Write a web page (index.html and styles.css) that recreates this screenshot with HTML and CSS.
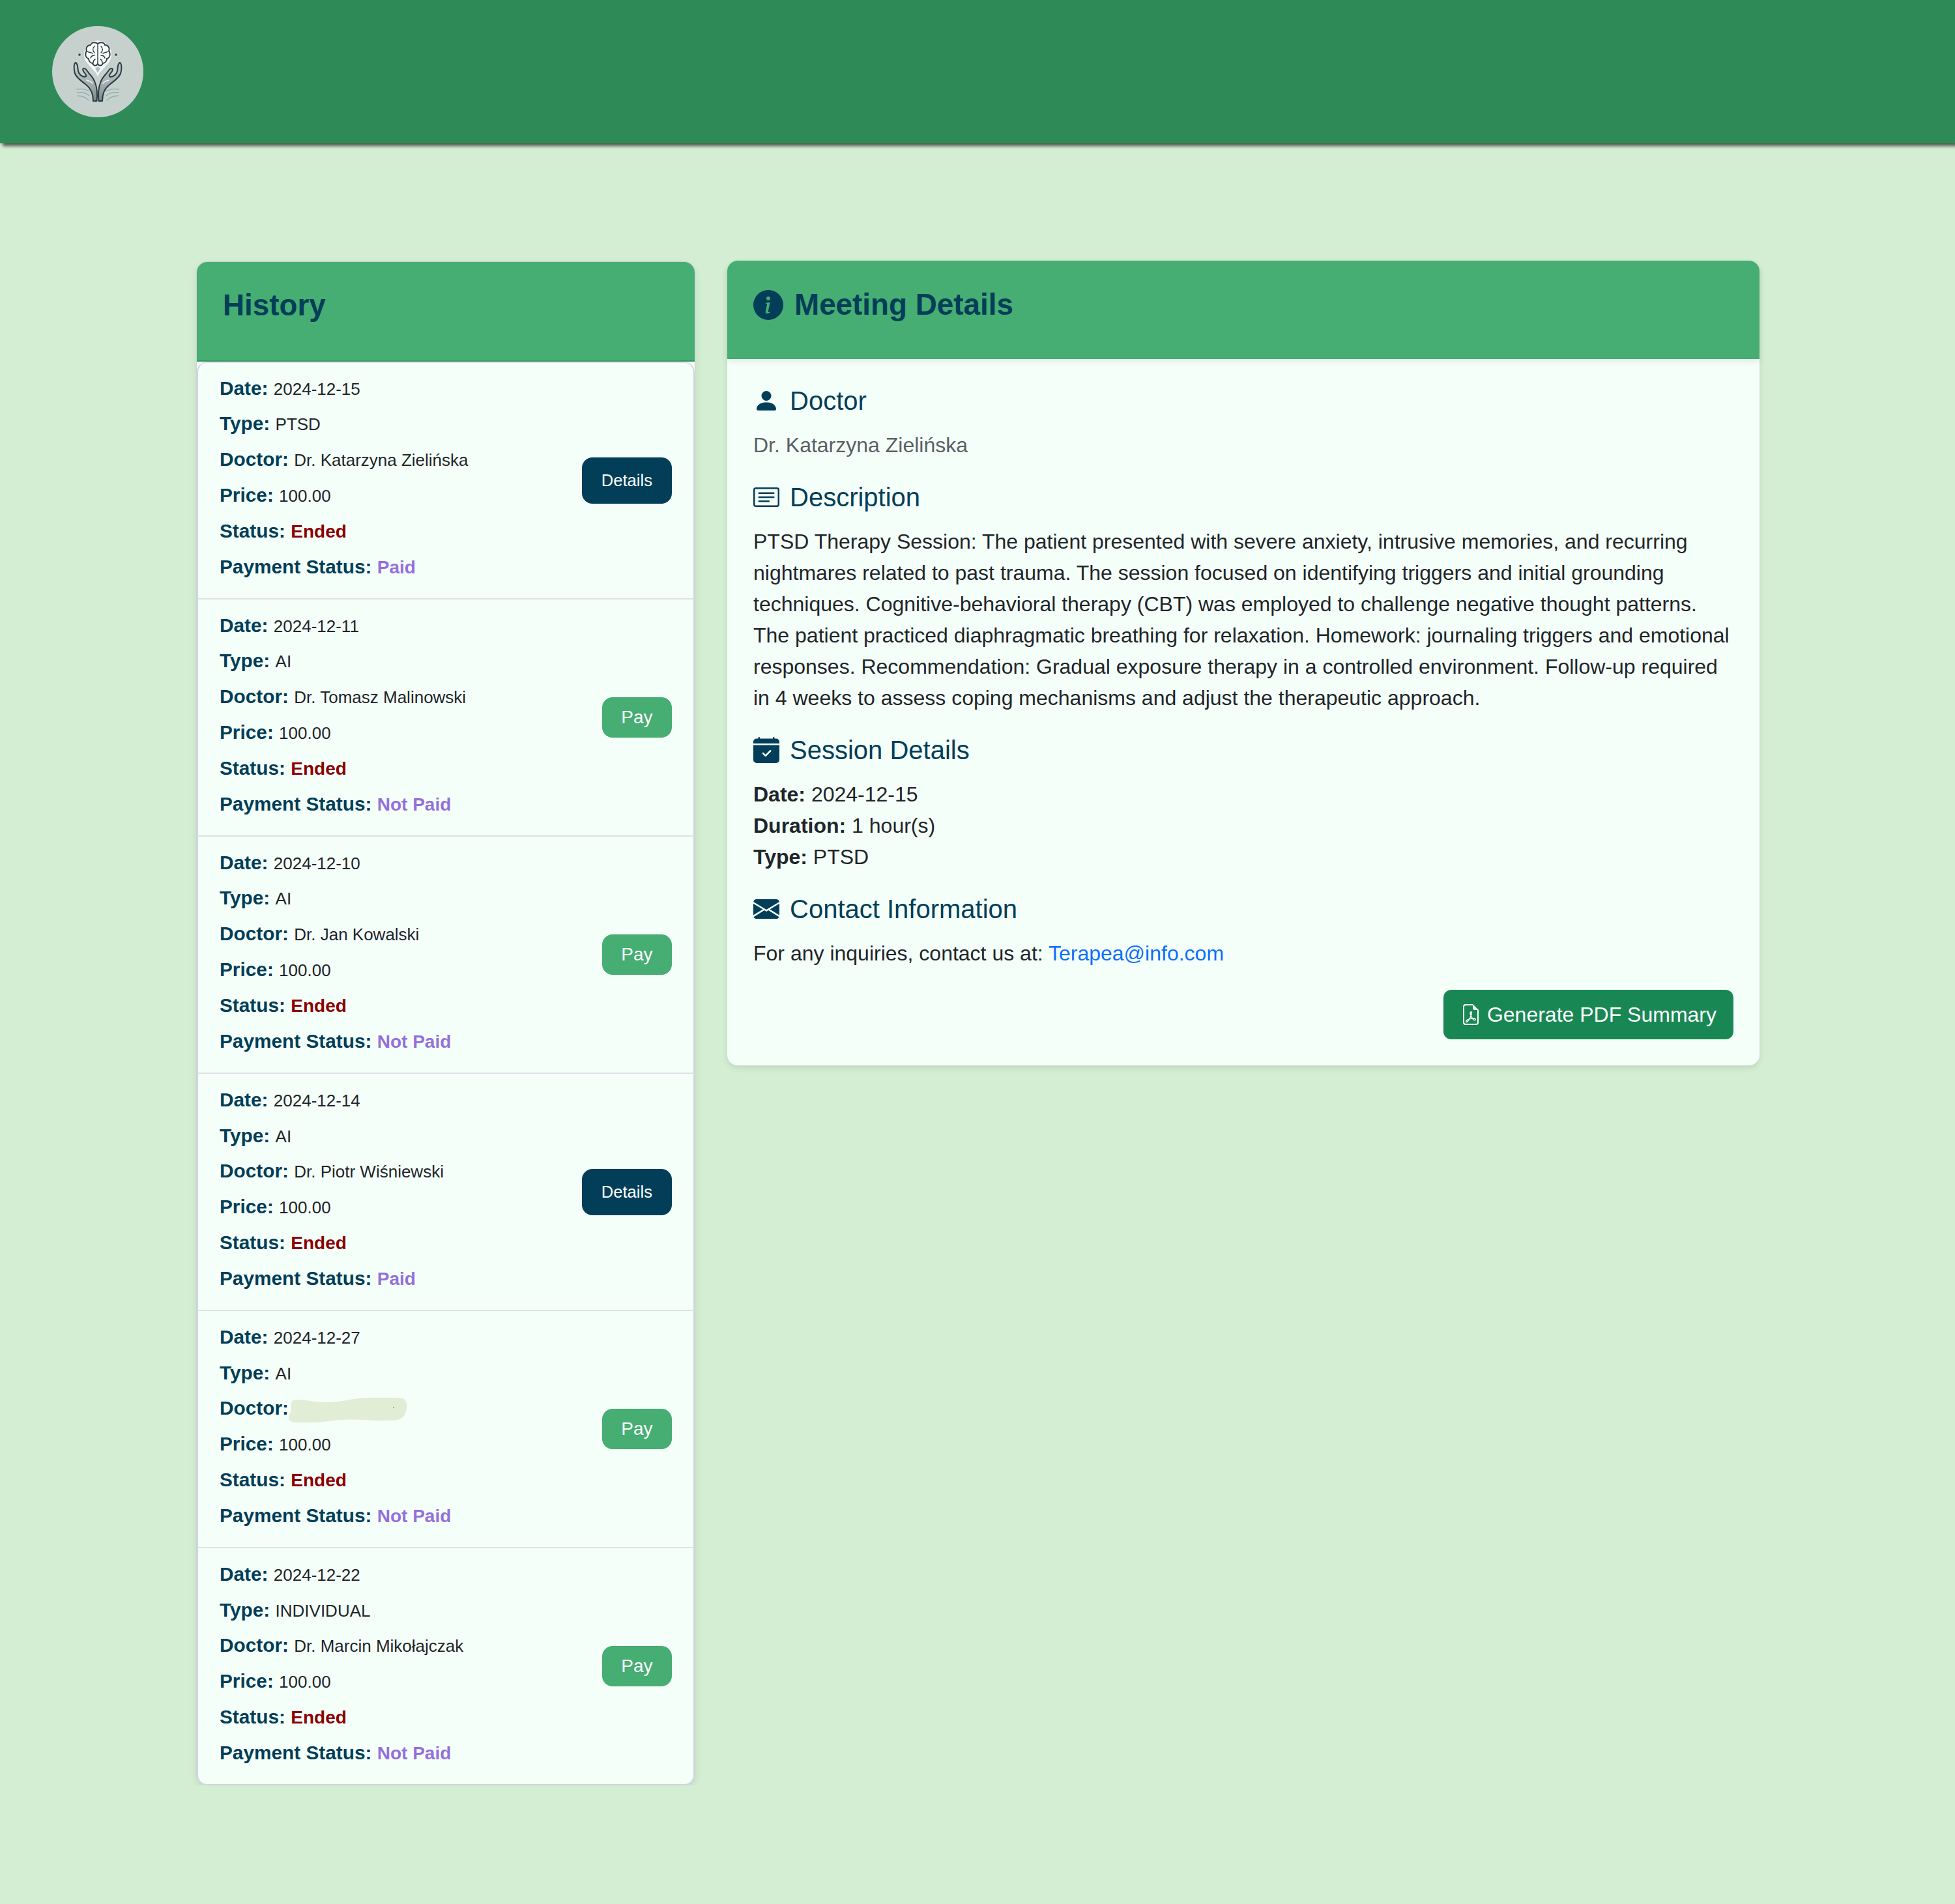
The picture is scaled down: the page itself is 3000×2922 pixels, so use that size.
FILE: index.html
```html
<!DOCTYPE html>
<html lang="en">
<head>
  <meta charset="UTF-8">
  <title>Meeting Details</title>
  <meta name="viewport" content="width=device-width, initial-scale=1.0">
  <link rel="stylesheet" href="styles.css">
</head>
<body>
  <header class="topbar">
    <svg class="logo" viewBox="0 0 140 140" aria-label="Logo">
      <defs>
        <linearGradient id="handFill" x1="0" y1="0" x2="0" y2="1">
          <stop offset="0" stop-color="#c2cccb"/>
          <stop offset="0.55" stop-color="#a4aeae"/>
          <stop offset="1" stop-color="#7d898b"/>
        </linearGradient>
        <g id="hand">
          <path d="M36 56C33 58 33 66 35 73C38 80 46 85 52 90C60 96 63 105 63 115L68.5 115C69.5 105 69 95 66 87C64 81 60 76 56 72C54 69 52 65 49 65C46 65 47 69 50 72C52 75 54 77 50 78C46 78 41 74 40 69C39 64 40 58 36 56Z" fill="url(#handFill)" stroke="#2b3c41" stroke-width="2" stroke-linejoin="round"/>
          <path d="M53 83C57 84 60 85 62 88" fill="none" stroke="#f1f4f3" stroke-width="1.5" stroke-linecap="round"/>
          <path d="M38 97c8-1 14 0 19 3M38 102c8-1 15 1 19 5M39 107c7 0 13 3 17 7" fill="none" stroke="#8fb0ae" stroke-width="1.4" stroke-linecap="round"/>
        </g>
      </defs>
      <circle cx="70" cy="70" r="70" fill="#c6d1ce"/>
      <circle cx="42" cy="44" r="1.8" fill="#2e4045"/>
      <circle cx="98" cy="44" r="1.8" fill="#2e4045"/>
      <use href="#hand"/>
      <use href="#hand" transform="matrix(-1 0 0 1 140 0)"/>
      <!-- brain -->
      <path d="M70 78C68 70 60 65 55 58A21 21 0 1 1 85 58C80 65 72 70 70 78Z" fill="#f7f9f8"/>
      <path d="M70 62l-4 3 4 7 4-7z" fill="#b4c0c0"/>
      <path d="M70 27C66 24 60 25 59 29C54 29 51 34 53 38C50 42 51 49 56 50C56 54 59 57 62 57C63 61 68 62 70 58C72 62 77 61 78 57C81 57 84 54 84 50C89 49 90 42 87 38C89 34 86 29 81 29C80 25 74 24 70 27Z" fill="#f9fbfa" stroke="#2b3c41" stroke-width="1.8"/>
      <path d="M70 27V58M65 31c-3 3-3 7 0 10M75 31c3 3 3 7 0 10M54 39c3 2 6 1 8 3M86 39c-3 2-6 1-8 3M59 49c1-3 3-4 6-4M81 49c-1-3-3-4-6-4M63 57c0-3 1-5 3-6M77 57c0-3-1-5-3-6" fill="none" stroke="#2b3c41" stroke-width="1.4" stroke-linecap="round"/>
    </svg>
  </header>

  <main class="content">
    <section class="history">
      <div class="history-header">
        <h3>History</h3>
      </div>
      <ul class="history-list">
        <li class="history-item">
          <div class="history-info">
            <p><strong>Date:</strong> <span class="value">2024-12-15</span></p>
            <p><strong>Type:</strong> <span class="value">PTSD</span></p>
            <p><strong>Doctor:</strong> <span class="value">Dr. Katarzyna Zielińska</span></p>
            <p><strong>Price:</strong> <span class="value">100.00</span></p>
            <p><strong>Status:</strong> <strong class="ended">Ended</strong></p>
            <p><strong>Payment Status:</strong> <strong class="paid">Paid</strong></p>
          </div>
          <button class="btn-details">Details</button>
        </li>
        <li class="history-item">
          <div class="history-info">
            <p><strong>Date:</strong> <span class="value">2024-12-11</span></p>
            <p><strong>Type:</strong> <span class="value">AI</span></p>
            <p><strong>Doctor:</strong> <span class="value">Dr. Tomasz Malinowski</span></p>
            <p><strong>Price:</strong> <span class="value">100.00</span></p>
            <p><strong>Status:</strong> <strong class="ended">Ended</strong></p>
            <p><strong>Payment Status:</strong> <strong class="paid">Not Paid</strong></p>
          </div>
          <button class="btn-pay">Pay</button>
        </li>
        <li class="history-item">
          <div class="history-info">
            <p><strong>Date:</strong> <span class="value">2024-12-10</span></p>
            <p><strong>Type:</strong> <span class="value">AI</span></p>
            <p><strong>Doctor:</strong> <span class="value">Dr. Jan Kowalski</span></p>
            <p><strong>Price:</strong> <span class="value">100.00</span></p>
            <p><strong>Status:</strong> <strong class="ended">Ended</strong></p>
            <p><strong>Payment Status:</strong> <strong class="paid">Not Paid</strong></p>
          </div>
          <button class="btn-pay">Pay</button>
        </li>
        <li class="history-item">
          <div class="history-info">
            <p><strong>Date:</strong> <span class="value">2024-12-14</span></p>
            <p><strong>Type:</strong> <span class="value">AI</span></p>
            <p><strong>Doctor:</strong> <span class="value">Dr. Piotr Wiśniewski</span></p>
            <p><strong>Price:</strong> <span class="value">100.00</span></p>
            <p><strong>Status:</strong> <strong class="ended">Ended</strong></p>
            <p><strong>Payment Status:</strong> <strong class="paid">Paid</strong></p>
          </div>
          <button class="btn-details">Details</button>
        </li>
        <li class="history-item">
          <div class="history-info">
            <p><strong>Date:</strong> <span class="value">2024-12-27</span></p>
            <p><strong>Type:</strong> <span class="value">AI</span></p>
            <p><strong>Doctor:</strong><svg class="redacted" viewBox="0 0 183 38"><path d="M8 4c14-3 30 3 52 3 24 0 46-8 68-7 14-1 42-2 50 2 6 4 5 14 2 22-3 9-12 11-26 11-24 1-50-3-72-1-20 1-36 5-56 5C12 39 2 38 1 32c-1-4 3-8 4-14C5 12 3 7 8 4z" fill="#e2edd6"/><circle cx="162" cy="15" r="1" fill="#8b9a9c"/></svg></p>
            <p><strong>Price:</strong> <span class="value">100.00</span></p>
            <p><strong>Status:</strong> <strong class="ended">Ended</strong></p>
            <p><strong>Payment Status:</strong> <strong class="paid">Not Paid</strong></p>
          </div>
          <button class="btn-pay">Pay</button>
        </li>
        <li class="history-item">
          <div class="history-info">
            <p><strong>Date:</strong> <span class="value">2024-12-22</span></p>
            <p><strong>Type:</strong> <span class="value">INDIVIDUAL</span></p>
            <p><strong>Doctor:</strong> <span class="value">Dr. Marcin Mikołajczak</span></p>
            <p><strong>Price:</strong> <span class="value">100.00</span></p>
            <p><strong>Status:</strong> <strong class="ended">Ended</strong></p>
            <p><strong>Payment Status:</strong> <strong class="paid">Not Paid</strong></p>
          </div>
          <button class="btn-pay">Pay</button>
        </li>
      </ul>
    </section>

    <section class="details">
      <div class="details-header">
        <svg class="title-icon" viewBox="0 0 16 16" fill="currentColor"><path d="M8 16A8 8 0 1 0 8 0a8 8 0 0 0 0 16zm.93-9.412-1 4.705c-.07.34.029.533.304.533.194 0 .487-.07.686-.246l-.088.416c-.287.346-.92.598-1.465.598-.703 0-1.002-.422-.808-1.319l.738-3.468c.064-.293.006-.399-.287-.47l-.451-.081.082-.381 2.29-.287zM8 5.5a1 1 0 1 1 0-2 1 1 0 0 1 0 2z"/></svg>
        <h3>Meeting Details</h3>
      </div>
      <div class="details-body">
        <div class="block">
          <h5><svg class="icon" viewBox="0 0 16 16" fill="currentColor"><path d="M3 14s-1 0-1-1 1-4 6-4 6 3 6 4-1 1-1 1H3Zm5-6a3 3 0 1 0 0-6 3 3 0 0 0 0 6Z"/></svg>Doctor</h5>
          <p class="muted">Dr. Katarzyna Zielińska</p>
        </div>
        <div class="block">
          <h5><svg class="icon" viewBox="0 0 16 16" fill="currentColor"><path d="M14.5 3a.5.5 0 0 1 .5.5v9a.5.5 0 0 1-.5.5h-13a.5.5 0 0 1-.5-.5v-9a.5.5 0 0 1 .5-.5h13zm-13-1A1.5 1.5 0 0 0 0 3.5v9A1.5 1.5 0 0 0 1.5 14h13a1.5 1.5 0 0 0 1.5-1.5v-9A1.5 1.5 0 0 0 14.5 2h-13z"/><path d="M3 5.5a.5.5 0 0 1 .5-.5h9a.5.5 0 0 1 0 1h-9a.5.5 0 0 1-.5-.5zM3 8a.5.5 0 0 1 .5-.5h9a.5.5 0 0 1 0 1h-9A.5.5 0 0 1 3 8zm0 2.5a.5.5 0 0 1 .5-.5h6a.5.5 0 0 1 0 1h-6a.5.5 0 0 1-.5-.5z"/></svg>Description</h5>
          <p>PTSD Therapy Session: The patient presented with severe anxiety, intrusive memories, and recurring nightmares related to past trauma. The session focused on identifying triggers and initial grounding techniques. Cognitive-behavioral therapy (CBT) was employed to challenge negative thought patterns. The patient practiced diaphragmatic breathing for relaxation. Homework: journaling triggers and emotional responses. Recommendation: Gradual exposure therapy in a controlled environment. Follow-up required in 4 weeks to assess coping mechanisms and adjust the therapeutic approach.</p>
        </div>
        <div class="block">
          <h5><svg class="icon" viewBox="0 0 16 16" fill="currentColor"><path d="M4 .5a.5.5 0 0 0-1 0V1H2a2 2 0 0 0-2 2v1h16V3a2 2 0 0 0-2-2h-1V.5a.5.5 0 0 0-1 0V1H4V.5zM16 14V5H0v9a2 2 0 0 0 2 2h12a2 2 0 0 0 2-2zm-5.146-5.146-3 3a.5.5 0 0 1-.708 0l-1.5-1.5a.5.5 0 0 1 .708-.708L7.5 10.793l2.646-2.647a.5.5 0 0 1 .708.708z"/></svg>Session Details</h5>
          <p><strong>Date:</strong> 2024-12-15</p>
          <p><strong>Duration:</strong> 1 hour(s)</p>
          <p><strong>Type:</strong> PTSD</p>
        </div>
        <div class="block">
          <h5><svg class="icon" viewBox="0 0 16 16" fill="currentColor"><path d="M.05 3.555A2 2 0 0 1 2 2h12a2 2 0 0 1 1.95 1.555L8 8.414.05 3.555ZM0 4.697v7.104l5.803-3.558L0 4.697ZM6.761 8.83l-6.57 4.026A2 2 0 0 0 2 14h12a2 2 0 0 0 1.808-1.144l-6.57-4.027L8 9.586l-1.239-.757Zm3.436-.586L16 11.801V4.697l-5.803 3.546Z"/></svg>Contact Information</h5>
          <p>For any inquiries, contact us at: <a href="#">Terapea@info.com</a></p>
        </div>
        <div class="actions">
          <button class="btn-pdf">
            <svg class="pdf-icon" viewBox="0 0 16 16" fill="currentColor"><path d="M14 14V4.5L9.5 0H4a2 2 0 0 0-2 2v12a2 2 0 0 0 2 2h8a2 2 0 0 0 2-2zM9.5 3A1.5 1.5 0 0 0 11 4.5h2V14a1 1 0 0 1-1 1H4a1 1 0 0 1-1-1V2a1 1 0 0 1 1-1h5.5v2z"/><path d="M4.603 14.087a.81.81 0 0 1-.438-.42c-.195-.388-.13-.776.08-1.102.198-.307.526-.568.897-.787a7.68 7.68 0 0 1 1.482-.645 19.697 19.697 0 0 0 1.062-2.227 7.269 7.269 0 0 1-.43-1.295c-.086-.4-.119-.796-.046-1.136.075-.354.274-.672.65-.823.192-.077.4-.12.602-.077a.7.7 0 0 1 .477.365c.088.164.12.356.127.538.007.188-.012.396-.047.614-.084.51-.27 1.134-.52 1.794a10.954 10.954 0 0 0 .98 1.686 5.753 5.753 0 0 1 1.334.05c.364.066.734.195.96.465.12.144.193.32.2.518.007.192-.047.382-.138.563a1.04 1.04 0 0 1-.354.416.856.856 0 0 1-.51.138c-.331-.014-.654-.196-.933-.417a5.712 5.712 0 0 1-.911-.95 11.651 11.651 0 0 0-1.997.406 11.307 11.307 0 0 1-1.02 1.51c-.292.35-.609.656-.927.787a.793.793 0 0 1-.58.029zm1.379-1.901c-.166.076-.32.156-.459.238-.328.194-.541.383-.647.547-.094.145-.096.25-.04.361.01.022.02.036.026.044a.266.266 0 0 0 .035-.012c.137-.056.355-.235.635-.572a8.18 8.18 0 0 0 .45-.606zm1.64-1.33a12.71 12.71 0 0 1 1.01-.193 11.744 11.744 0 0 1-.51-.858 20.801 20.801 0 0 1-.5 1.05zm2.446.45c.15.163.296.3.435.41.24.19.407.253.498.256a.107.107 0 0 0 .07-.015.307.307 0 0 0 .094-.125.436.436 0 0 0 .059-.2.095.095 0 0 0-.026-.063c-.052-.062-.2-.152-.518-.209a3.876 3.876 0 0 0-.612-.053zM8.078 7.8a6.7 6.7 0 0 0 .2-.828c.031-.188.043-.343.038-.465a.613.613 0 0 0-.032-.198.517.517 0 0 0-.145.04c-.087.035-.158.106-.196.283-.04.192-.03.469.046.822.024.111.054.227.09.346z"/></svg>
            Generate PDF Summary
          </button>
        </div>
      </div>
    </section>
  </main>
</body>
</html>
```

FILE: styles.css
```css
* {
  box-sizing: border-box;
}

body {
  margin: 0;
  background: #d4eed3;
  color: #212529;
  font-family: "Liberation Sans", Arial, sans-serif;
  font-size: 32px;
  line-height: 48px;
}

p {
  margin: 0;
}

h3 {
  margin: 0;
  font-size: 45.8px;
  line-height: 54px;
  font-weight: bold;
  color: #023e58;
}

h5 {
  display: flex;
  align-items: center;
  gap: 16px;
  margin: 0 0 20px;
  font-size: 40px;
  line-height: 48px;
  font-weight: normal;
  color: #023e58;
}

button {
  border: 0;
  color: #fff;
  font-family: inherit;
  cursor: pointer;
}

/* top bar */
.topbar {
  height: 220px;
  padding: 40px 80px;
  background: #2e8b57;
  box-shadow: 4px 4px 5px rgba(0, 0, 0, 0.65);
}

.logo {
  display: block;
  width: 140px;
  height: 140px;
}

/* two columns */
.content {
  display: flex;
  align-items: flex-start;
  justify-content: center;
  gap: 50px;
  padding: 180px 0 0 2px;
}

/* history list */
.history {
  width: 764px;
  margin-top: 2px;
  border-radius: 16px;
  background: #f5fffa;
  box-shadow: 0 0 0 1px #cfd3d6, 0 4px 12px rgba(0, 0, 0, 0.1);
}

.history-header {
  height: 153px;
  padding: 40px 40px 0;
  background: #46ad73;
  border-bottom: 2px solid #3c9363;
  border-radius: 16px 16px 0 0;
}

.history-list {
  margin: 0;
  padding: 0;
  list-style: none;
}

.history-item {
  display: flex;
  align-items: center;
  justify-content: space-between;
  padding: 0 33px;
  border: 2px solid #d2d6da;
  border-width: 0 2px 2px;
  border-bottom-color: #dee2e6;
}

.history-item:first-child {
  border-top-width: 2px;
  border-top-color: #dee2e6;
  border-radius: 16px 16px 0 0;
}

.history-item:last-child {
  border-bottom-color: #d2d6da;
  border-radius: 0 0 16px 16px;
}

.history-info {
  padding: 12.5px 0 20.1px;
}

.history-item:first-child .history-info {
  padding-top: 11.5px;
}

.history-info p {
  font-size: 29.8px;
  line-height: 54.9px;
  color: #023e58;
}

.value {
  font-size: 26px;
  line-height: 1;
  color: #212529;
}

.ended,
.paid {
  font-size: 28px;
  line-height: 1;
}

.ended {
  color: #8b0000;
}

.paid {
  color: #9370db;
}

.redacted {
  width: 183px;
  height: 38px;
  margin-left: -1px;
  vertical-align: middle;
}

.btn-details {
  height: 71px;
  padding: 0 30px;
  border-radius: 16px;
  background: #023e58;
  font-size: 25.6px;
}

.btn-pay {
  height: 62px;
  padding: 0 29.5px;
  border-radius: 16px;
  background: #46ad73;
  font-size: 28px;
}

/* meeting details */
.details {
  width: 1584px;
  border-radius: 16px;
  background: #f5fffa;
  box-shadow: 0 4px 10px rgba(0, 0, 0, 0.1);
}

.details-header {
  display: flex;
  align-items: center;
  gap: 17px;
  height: 151px;
  padding: 41px 40px 56px;
  border-radius: 16px 16px 0 0;
  background: #46ad73;
  box-shadow: 0 4px 8px rgba(0, 0, 0, 0.08);
  color: #023e58;
}

.title-icon {
  width: 46px;
  height: 46px;
}

.details-body {
  padding: 40px;
}

.icon {
  width: 40px;
  height: 40px;
  flex: none;
}

.block {
  margin-bottom: 32px;
}

.muted {
  color: #5a6064;
}

a {
  color: #0d6efd;
  text-decoration: none;
}

.actions {
  display: flex;
  justify-content: flex-end;
}

.btn-pdf {
  display: flex;
  align-items: center;
  gap: 9px;
  height: 76px;
  padding: 0 26px;
  border-radius: 12px;
  background: #198754;
  font-size: 32px;
}

.pdf-icon {
  width: 32px;
  height: 32px;
}
```
